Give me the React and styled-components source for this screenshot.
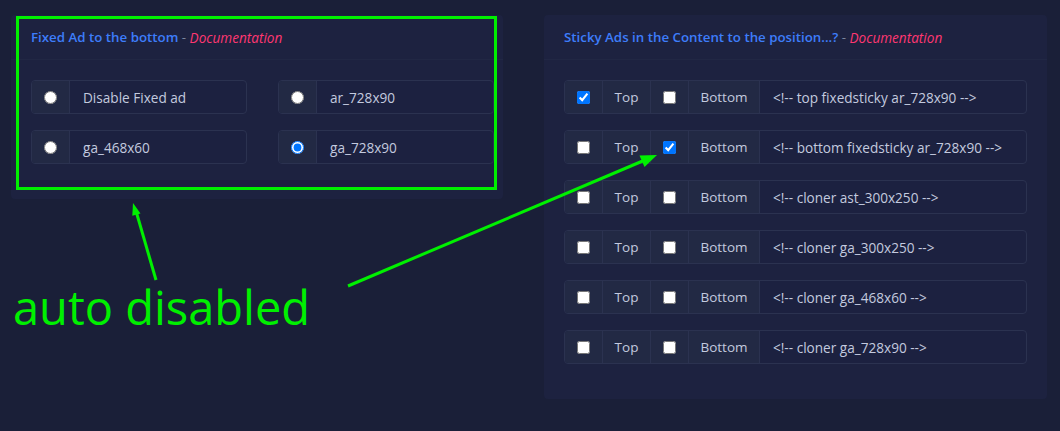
import React from "react";
import styled, { createGlobalStyle } from "styled-components";

const GlobalStyle = createGlobalStyle`
    html, body {
        margin: 0;
        padding: 0;
        background: #1a1f38;
        font-family: "Open Sans", "Noto Sans", sans-serif;
    }
`;

const Page = styled.div`
    position: relative;
    width: 1060px;
    height: 431px;
    overflow: hidden;
    display: flex;
    align-items: flex-start;
    gap: 41px;
    padding: 15px 0 0 11px;
    box-sizing: border-box;
`;

const Card = styled.div`
    width: ${(props) => props.width}px;
    background: #1d2240;
    border-radius: 4px;
    flex-shrink: 0;
`;

const CardHeader = styled.div`
    height: 44px;
    display: flex;
    align-items: center;
    padding: 0 20px;
    border-bottom: 1px solid #212744;
    font-size: 13.3px;
    white-space: pre;
`;

const Title = styled.span`
    color: #3d7dfa;
    font-weight: 600;
`;

const Dash = styled.span`
    color: #7e86a0;
`;

const DocLink = styled.a`
    color: #ff3772;
    font-style: italic;
    font-size: 13.6px;
    text-decoration: none;
`;

const CardBody = styled.div`
    padding: 20px ${(props) => props.right}px 19px 20px;
`;

const Grid = styled.div`
    display: grid;
    grid-template-columns: 216px 216px;
    column-gap: 31px;
`;

const List = styled.div`
    display: flex;
    flex-direction: column;
`;

const Row = styled.div`
    display: flex;
    height: 34px;
    box-sizing: border-box;
    margin-bottom: 16px;
    border: 1px solid #2b3250;
    border-radius: 4px;
    overflow: hidden;
    background: #1c2140;
`;

const Cell = styled.div`
    width: ${(props) => props.width}px;
    flex-shrink: 0;
    display: flex;
    align-items: center;
    justify-content: center;
    background: #222944;
    border-right: 1px solid #2b3250;
    color: #c3cadf;
    font-size: 13.5px;
    box-sizing: border-box;
`;

const Label = styled.div`
    flex: 1;
    display: flex;
    align-items: center;
    padding-left: 13px;
    color: #c3cadf;
    font-size: 13.6px;
    white-space: nowrap;
`;

const Input = styled.input`
    margin: 0;
    width: 13px;
    height: 13px;
`;

const Overlay = styled.svg`
    position: absolute;
    left: 0;
    top: 0;
    pointer-events: none;
`;

const fixedAds = [
    { label: "Disable Fixed ad", checked: false },
    { label: "ar_728x90", checked: false },
    { label: "ga_468x60", checked: false },
    { label: "ga_728x90", checked: true },
];

const stickyAds = [
    { top: true, bottom: false, code: "<!-- top fixedsticky ar_728x90 -->" },
    { top: false, bottom: true, code: "<!-- bottom fixedsticky ar_728x90 -->" },
    { top: false, bottom: false, code: "<!-- cloner ast_300x250 -->" },
    { top: false, bottom: false, code: "<!-- cloner ga_300x250 -->" },
    { top: false, bottom: false, code: "<!-- cloner ga_468x60 -->" },
    { top: false, bottom: false, code: "<!-- cloner ga_728x90 -->" },
];

const Header = ({ title }) => (
    <CardHeader>
        <Title>{title}</Title>
        <Dash> - </Dash>
        <DocLink href="#">Documentation</DocLink>
    </CardHeader>
);

const App = () => {
    return (
        <>
            <GlobalStyle />
            <Page>
                <Card width={492}>
                    <Header title="Fixed Ad to the bottom" />
                    <CardBody right={10}>
                        <Grid>
                            {fixedAds.map((ad) => (
                                <Row key={ad.label}>
                                    <Cell width={38}>
                                        <Input
                                            type="radio"
                                            name="fixed"
                                            defaultChecked={ad.checked}
                                        />
                                    </Cell>
                                    <Label>{ad.label}</Label>
                                </Row>
                            ))}
                        </Grid>
                    </CardBody>
                </Card>
                <Card width={503}>
                    <Header title="Sticky Ads in the Content to the position...?" />
                    <CardBody right={20}>
                        <List>
                            {stickyAds.map((ad) => (
                                <Row key={ad.code}>
                                    <Cell width={38}>
                                        <Input type="checkbox" defaultChecked={ad.top} />
                                    </Cell>
                                    <Cell width={48}>Top</Cell>
                                    <Cell width={38}>
                                        <Input type="checkbox" defaultChecked={ad.bottom} />
                                    </Cell>
                                    <Cell width={71}>Bottom</Cell>
                                    <Label>{ad.code}</Label>
                                </Row>
                            ))}
                        </List>
                    </CardBody>
                </Card>
                <Overlay width="1060" height="431" viewBox="0 0 1060 431">
                    <rect
                        x="17.5"
                        y="17.5"
                        width="478"
                        height="171"
                        fill="none"
                        stroke="#00f000"
                        strokeWidth="3"
                    />
                    <line x1="156" y1="280" x2="136" y2="211" stroke="#00f000" strokeWidth="3" />
                    <polygon points="133,203 140.5,213.5 132.3,215.8" fill="#00f000" />
                    <line x1="348" y1="286" x2="645" y2="160" stroke="#00f000" strokeWidth="3" />
                    <polygon points="657,155 644.5,167 639.5,155.5" fill="#00f000" />
                    <text
                        x="13"
                        y="325"
                        fill="#00f000"
                        fontSize="47"
                        fontFamily="Open Sans, sans-serif"
                    >
                        auto disabled
                    </text>
                </Overlay>
            </Page>
        </>
    );
};

export default App;
